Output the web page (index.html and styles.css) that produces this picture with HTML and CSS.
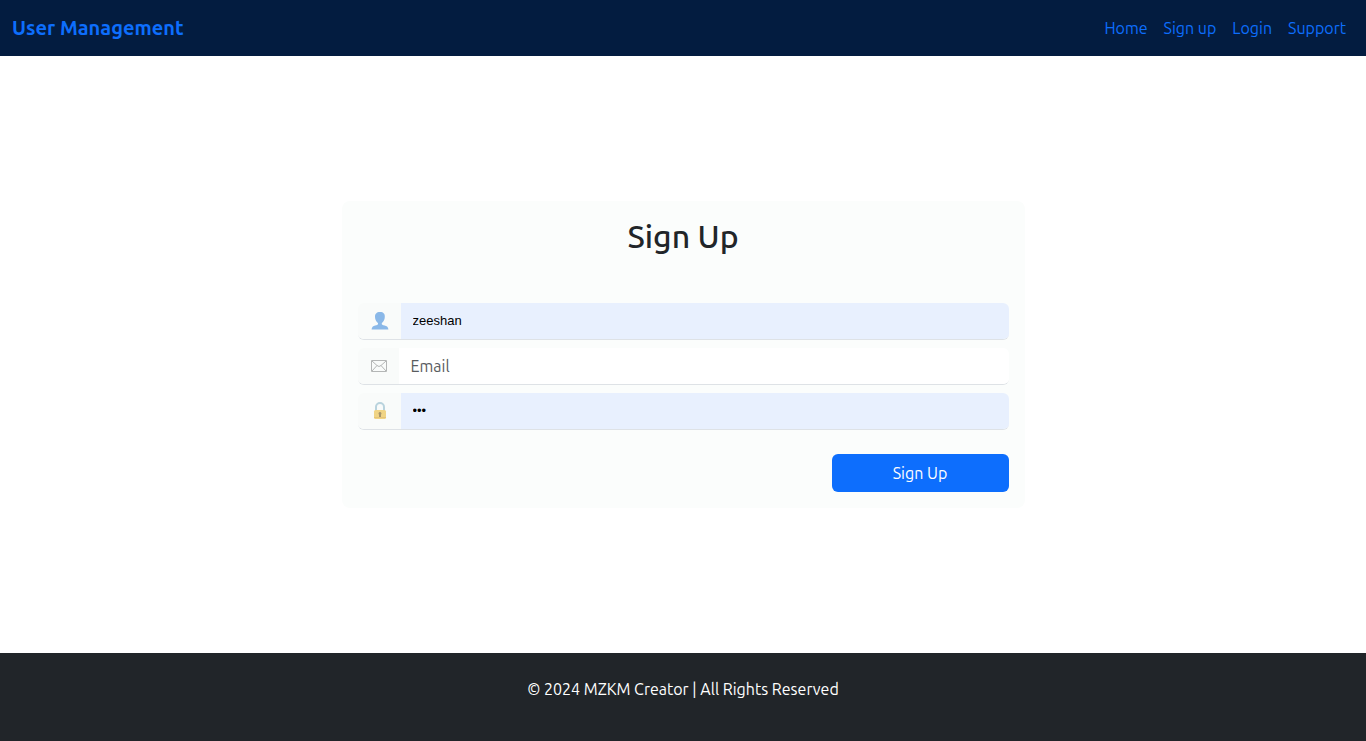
FILE: index.html
```html
<!DOCTYPE html>
<html lang="en">
<head>
<meta charset="utf-8">
<meta name="viewport" content="width=device-width, initial-scale=1">
<title>User Management</title>
<link rel="stylesheet" href="styles.css">
</head>
<body>
<header class="navbar">
  <a class="brand" href="#">User Management</a>
  <nav class="nav">
    <a href="#">Home</a>
    <a href="#">Sign up</a>
    <a href="#">Login</a>
    <a href="#">Support</a>
  </nav>
</header>
<main class="content">
  <section class="card">
    <h1 class="title">Sign Up</h1>
    <form class="form">
      <div class="field">
        <label class="addon" for="username" aria-label="Username">
          <svg class="icon" viewBox="0 0 18 18" aria-hidden="true">
            <path fill="#8ab8e8" d="M9 0C5.500 0 3.900 2 4 5c.1 2.600 1.300 4.900 3 6v1.300c-.4.900-2.400 1-4.200 1.700C1.300 14.700.7 15.900.6 17.500h16.800c-.1-1.600-.7-2.800-2.400-3.500-1.800-.7-3.800-.8-4.200-1.700V11c1.700-1.100 2.900-3.400 3-6C14.100 2 12.500 0 9 0z"/>
          </svg>
        </label>
        <input class="input filled" id="username" type="text" value="zeeshan">
      </div>
      <div class="field">
        <label class="addon narrow" for="email" aria-label="Email">
          <svg class="icon" viewBox="0 0 18 18" aria-hidden="true">
            <path fill="none" stroke="#b4b6b6" d="M1.500 3.500h15v11h-15zM2 4l5 4.500Q9 10.500 11 8.500L16 4M2 14l5-5.500M16 14l-5-5.500"/>
          </svg>
        </label>
        <input class="input" id="email" type="email" placeholder="Email">
      </div>
      <div class="field">
        <label class="addon" for="password" aria-label="Password">
          <svg class="icon" viewBox="0 0 18 18" aria-hidden="true">
            <path fill="none" stroke="#b9d3dd" stroke-width="2" d="M5 9V5a4 4 0 0 1 8 0V9"/>
            <rect x="3" y="8" width="12" height="9" rx="1.500" fill="#f0d485"/>
            <path stroke="#e6c478" d="M3 15.500h12"/>
            <path fill="#a8966c" d="M9 10a1.500 1.500 0 0 1 1 2.600V15H8v-2.400A1.500 1.500 0 0 1 9 10z"/>
          </svg>
        </label>
        <input class="input filled" id="password" type="password" value="abc">
      </div>
      <button class="submit" type="button">Sign Up</button>
    </form>
  </section>
</main>
<footer class="footer">
  <p>© 2024 MZKM Creator | All Rights Reserved</p>
</footer>
</body>
</html>
```
FILE: styles.css
```css
* {
  box-sizing: border-box;
}

body {
  margin: 0;
  min-height: 100vh;
  display: flex;
  flex-direction: column;
  background: #fff;
  color: #212529;
  font: 400 16px/24px Ubuntu, "Open Sans", "Noto Sans", sans-serif;
}

.navbar {
  display: flex;
  align-items: center;
  justify-content: space-between;
  min-height: 56px;
  padding: 0 20px 0 12px;
  background: #031c40;
}

.navbar a {
  color: #0d6efd;
  text-decoration: none;
}

.navbar .brand {
  font-size: 20px;
  font-weight: 600;
}

.nav {
  display: flex;
  gap: 16px;
}

.content {
  flex: 1;
  display: flex;
  align-items: center;
  justify-content: center;
}

.card {
  width: 50%;
  padding: 16px;
  border-radius: 8px;
  background: #fbfdfc;
}

.title {
  margin: 0 0 48px;
  font-size: 32px;
  font-weight: 500;
  line-height: 38px;
  text-align: center;
}

.form {
  display: flex;
  flex-direction: column;
  gap: 8px;
}

.field {
  display: flex;
  height: 37px;
  border-bottom: 1px solid #dee2e6;
  border-radius: 6px;
  overflow: hidden;
}

.addon {
  flex: none;
  display: flex;
  align-items: center;
  width: 43px;
  padding-left: 13px;
  background: #f9fbfa;
}

.addon.narrow {
  width: 41px;
  padding-left: 12px;
}

.icon {
  width: 18px;
  height: 18px;
}

.input {
  flex: 1;
  min-width: 0;
  padding: 0 12px;
  border: 0;
  outline: 0;
  background: #fff;
  color: #212529;
  font: inherit;
}

.input.filled {
  background: #e8f0fe;
  color: #000;
  font-family: "Liberation Sans", Arial, sans-serif;
  font-size: 13px;
}

.input::placeholder {
  color: #595c5f;
  opacity: 1;
}

.submit {
  align-self: flex-end;
  width: 177px;
  height: 38px;
  margin-top: 16px;
  border: 0;
  border-radius: 6px;
  background: #0d6efd;
  color: #fff;
  font: inherit;
}

.footer {
  padding: 24px;
  background: #212529;
  color: #fff;
  text-align: center;
}

.footer p {
  margin: 0 0 16px;
}
```
